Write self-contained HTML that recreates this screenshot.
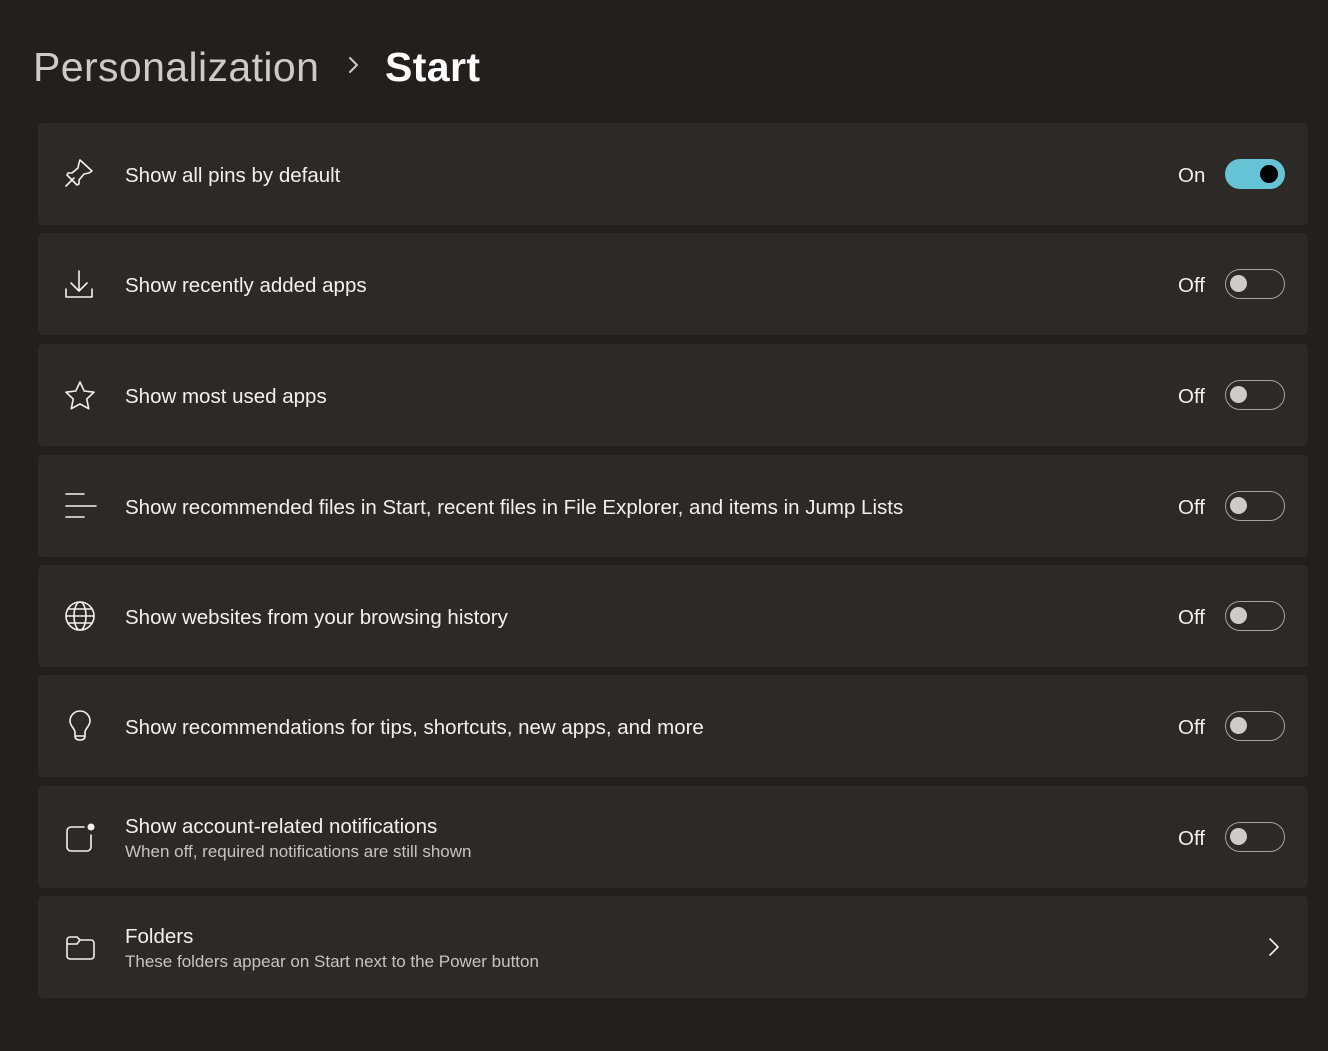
<!DOCTYPE html>
<html><head><style>
body{margin:0;width:1328px;height:1051px;background:#231f1c;font-family:"Liberation Sans",sans-serif;color:#fff;overflow:hidden;position:relative}
.h{position:absolute;top:44px;left:33px;font-size:41px;white-space:nowrap;letter-spacing:0.4px}
.h .a{color:#cfcac6}
.h .c{position:absolute;left:314px;top:12px;width:14px;height:18px}
.h .b{font-weight:bold;position:absolute;left:352px;top:0}
.card{position:absolute;left:38px;width:1270px;height:102px;background:#2d2926;border-radius:5px}
.ic{position:absolute;left:24px;top:34px;width:36px;height:36px}
.t{position:absolute;left:87px;top:41px;font-size:20.5px;color:#f3f0ee;white-space:nowrap}
.t2{top:29px}
.s{display:block;font-size:17px;color:#c9c4c0;margin-top:3px}
.st{position:absolute;left:1140px;top:41px;font-size:20.5px;color:#f3f0ee}
.tg{position:absolute;left:1187px;top:36px;width:60px;height:30px;border:1.5px solid #a8a29e;border-radius:15px;box-sizing:border-box}
.tg:after{content:"";position:absolute;left:4px;top:5px;width:17px;height:17px;border-radius:50%;background:#cfcbc8}
.tg.on{background:#66c3d6;border-color:#66c3d6}
.tg.on:after{left:auto;right:6px;background:#000;width:18px;height:18px;top:4.5px}
svg{fill:none;stroke:#f3f0ee;stroke-width:1.6;stroke-linecap:round;stroke-linejoin:round}
</style></head><body>
<div class="h"><span class="a">Personalization</span><svg class="c" viewBox="0 0 14 18"><path d="M3 2l7 7-7 7" style="stroke:#cfcac6;stroke-width:2"/></svg><span class="b">Start</span></div>

<div class="card" style="top:123px"><svg class="ic" viewBox="0 0 36 36"><path d="M4 29l8-8M18 3l12 11-3 2-5 1-5 6 0 4-2 1-10-10 1-2 4 0 6-5 1-5z"/></svg><div class="t">Show all pins by default</div><div class="st">On</div><div class="tg on"></div></div>

<div class="card" style="top:233px"><svg class="ic" viewBox="0 0 36 36"><path d="M17 4v20M9 16l8 8 8-8M4 22v8h26v-8"/></svg><div class="t">Show recently added apps</div><div class="st">Off</div><div class="tg"></div></div>

<div class="card" style="top:344px"><svg class="ic" viewBox="0 0 36 36"><path d="M18 4l4.2 9 9.8 1.2-7.2 6.8 1.9 9.7L18 26l-8.7 4.7 1.9-9.7L4 14.2 13.8 13z"/></svg><div class="t">Show most used apps</div><div class="st">Off</div><div class="tg"></div></div>

<div class="card" style="top:455px"><svg class="ic" viewBox="0 0 36 36"><path d="M4 5h18M4 17h30M4 28h18"/></svg><div class="t">Show recommended files in Start, recent files in File Explorer, and items in Jump Lists</div><div class="st">Off</div><div class="tg"></div></div>

<div class="card" style="top:565px"><svg class="ic" viewBox="0 0 36 36"><circle cx="18" cy="17" r="14"/><ellipse cx="18" cy="17" rx="6" ry="14"/><path d="M4 17h28M6 10h24M6 24h24"/></svg><div class="t">Show websites from your browsing history</div><div class="st">Off</div><div class="tg"></div></div>

<div class="card" style="top:675px"><svg class="ic" viewBox="0 0 36 36"><path d="M13 27v-4c0-3-5-6-5-11a10 10 0 0120 0c0 5-5 8-5 11v4zM13 27q0 4 5 4q5 0 5-4"/></svg><div class="t">Show recommendations for tips, shortcuts, new apps, and more</div><div class="st">Off</div><div class="tg"></div></div>

<div class="card" style="top:786px"><svg class="ic" viewBox="0 0 36 36"><path d="M22 7H9a4 4 0 00-4 4v16a4 4 0 004 4h16a4 4 0 004-4V15"/><circle cx="29" cy="7" r="3.5" fill="#f3f0ee" stroke="none"/></svg><div class="t t2">Show account-related notifications<span class="s">When off, required notifications are still shown</span></div><div class="st">Off</div><div class="tg"></div></div>

<div class="card" style="top:896px"><svg class="ic" viewBox="0 0 36 36"><path d="M5 10a3 3 0 013-3h7l3 3h11a3 3 0 013 3v13a3 3 0 01-3 3H8a3 3 0 01-3-3zM5 14h10l3-4"/></svg><div class="t t2">Folders<span class="s">These folders appear on Start next to the Power button</span></div><svg style="position:absolute;left:1226px;top:40px;width:20px;height:22px" viewBox="0 0 20 22"><path d="M6 3l8 8-8 8"/></svg></div>
</body></html>
